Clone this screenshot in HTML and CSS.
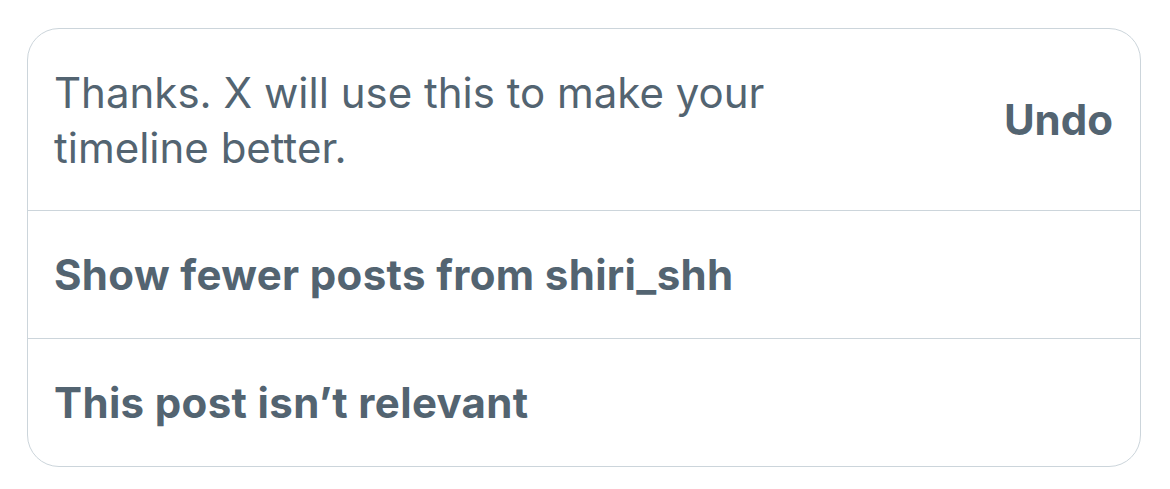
FILE: index.html
```html
<!DOCTYPE html>
<html>
<head>
<meta charset="utf-8">
<link rel="stylesheet" href="styles.css">
</head>
<body>
<div class="card">
  <div class="row feedback">
    <p class="msg">Thanks. X will use this to make your<br>timeline better.</p>
    <span class="undo">Undo</span>
  </div>
  <div class="row option">Show fewer posts from shiri_shh</div>
  <div class="row option">This post isn’t relevant</div>
</div>
</body>
</html>
```
FILE: styles.css
```css
html, body {
  margin: 0;
  padding: 0;
  background: #ffffff;
}
body {
  padding: 28px 29px 0 27px;
  font-family: Inter, "Liberation Sans", Arial, sans-serif;
  color: #536471;
}
.card {
  border: 1px solid #ccd5db;
  border-radius: 32px;
  overflow: hidden;
}
.row {
  padding: 0 27px 0 26px;
  display: flex;
  align-items: center;
}
.row + .row {
  border-top: 1px solid #ccd5db;
}
.feedback {
  height: 181px;
  justify-content: space-between;
}
.msg {
  margin: 0;
  font-size: 42px;
  line-height: 55px;
  font-weight: 400;
}
.undo {
  font-size: 42px;
  font-weight: 700;
}
.option {
  height: 127px;
  font-size: 42px;
  font-weight: 700;
  letter-spacing: 0.35px;
}
```
